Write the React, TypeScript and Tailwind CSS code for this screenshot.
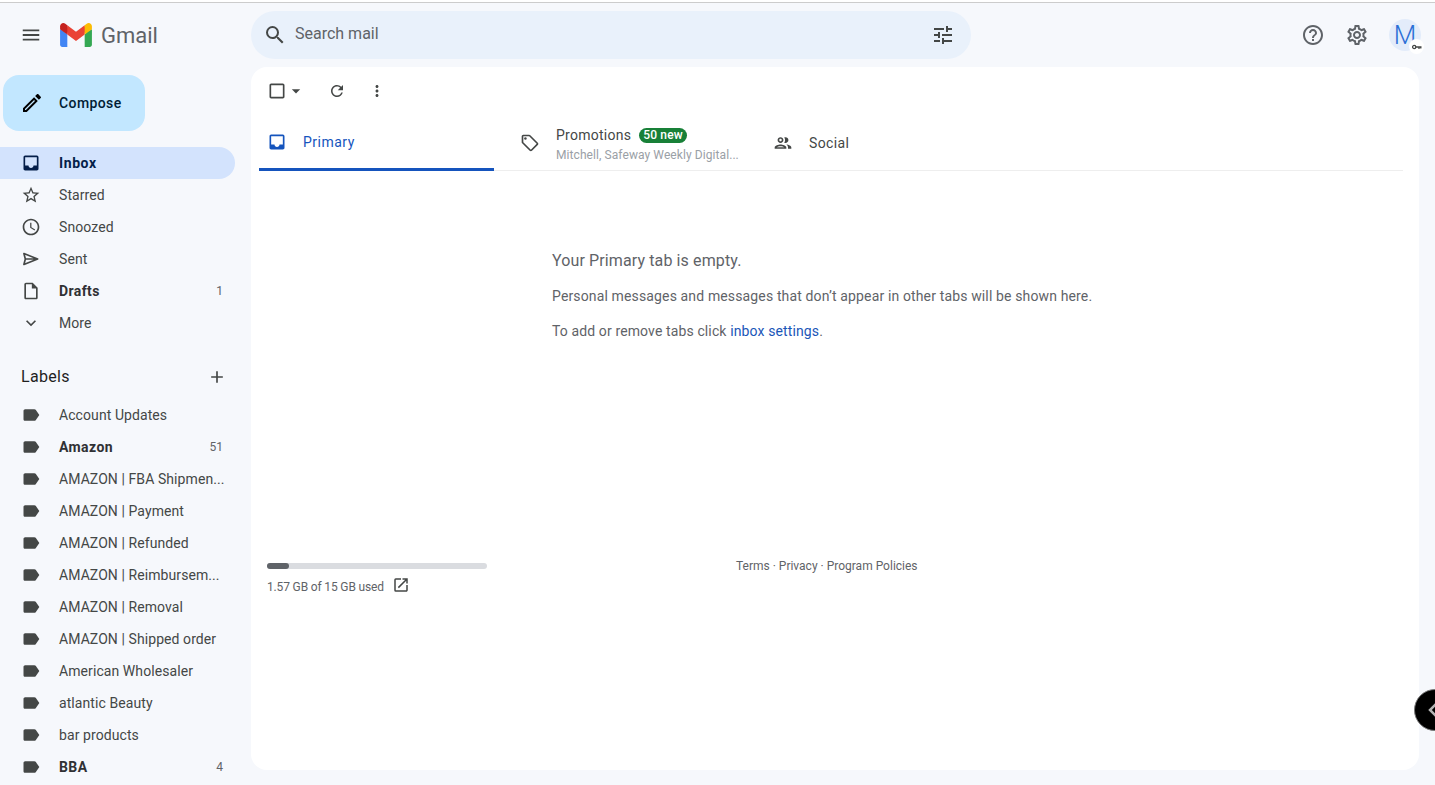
import type { ReactNode } from "react"
import {
  MdAccessTime,
  MdAdd,
  MdArrowDropDown,
  MdCheckBoxOutlineBlank,
  MdExpandMore,
  MdHelpOutline,
  MdInbox,
  MdLabel,
  MdMenu,
  MdMoreVert,
  MdOpenInNew,
  MdOutlineEdit,
  MdOutlineInsertDriveFile,
  MdOutlineLocalOffer,
  MdOutlinePeople,
  MdOutlineSettings,
  MdRefresh,
  MdSearch,
  MdStarBorder,
  MdTune,
} from "react-icons/md"

const mainNav: { label: string; icon: ReactNode; count?: string; bold?: boolean }[] = [
  { label: "Starred", icon: <MdStarBorder size={20} /> },
  { label: "Snoozed", icon: <MdAccessTime size={20} /> },
  { label: "Sent", icon: <SendIcon /> },
  { label: "Drafts", icon: <MdOutlineInsertDriveFile size={20} />, count: "1", bold: true },
  { label: "More", icon: <MdExpandMore size={20} /> },
]

const labels: { label: string; count?: string; bold?: boolean }[] = [
  { label: "Account Updates" },
  { label: "Amazon", count: "51", bold: true },
  { label: "AMAZON | FBA Shipmen..." },
  { label: "AMAZON | Payment" },
  { label: "AMAZON | Refunded" },
  { label: "AMAZON | Reimbursem..." },
  { label: "AMAZON | Removal" },
  { label: "AMAZON | Shipped order" },
  { label: "American Wholesaler" },
  { label: "atlantic Beauty" },
  { label: "bar products" },
  { label: "BBA", count: "4", bold: true },
]

function SendIcon() {
  return (
    <svg width="20" height="20" viewBox="0 0 24 24" fill="none" stroke="currentColor" strokeWidth="2" strokeLinejoin="round">
      <path d="M3.5 5.5 20 12 3.5 18.5l1.7-6.5zM5.2 12H20" />
    </svg>
  )
}

function GmailLogo() {
  return (
    <svg width="32" height="24" viewBox="0 0 256 193">
      <path fill="#4285F4" d="M58.182 192.05V93.14L27.507 65.077 0 49.504v125.091c0 9.658 7.825 17.455 17.455 17.455h40.727Z" />
      <path fill="#34A853" d="M197.818 192.05h40.727c9.659 0 17.455-7.826 17.455-17.455V49.505l-31.156 17.837-27.026 25.798v98.91Z" />
      <path fill="#EA4335" d="m58.182 93.14-4.174-38.647 4.174-36.989L128 69.868l69.818-52.364 4.67 34.992-4.67 40.644L128 145.504z" />
      <path fill="#FBBC04" d="M197.818 17.504V93.14L256 49.504V26.231c0-21.585-24.64-33.89-41.89-20.945l-16.292 12.218Z" />
      <path fill="#C5221F" d="M0 49.504l26.759 20.07L58.182 93.14V17.504L41.89 5.286C24.61-7.66 0 4.646 0 26.23v23.273Z" />
    </svg>
  )
}

function SideRow({ label, icon, count, bold }: { label: string; icon: ReactNode; count?: string; bold?: boolean }) {
  return (
    <div className="flex h-8 w-[235px] items-center pl-[21px] pr-[12px] text-[#444746]">
      <span className="flex w-[38px] shrink-0 items-center">{icon}</span>
      <span className={`whitespace-nowrap text-sm ${bold ? "font-bold tracking-[0.4px] text-[#303134]" : "tracking-[0.08px]"}`}>{label}</span>
      {count && <span className="ml-auto pl-2 text-xs text-[#5f6368]">{count}</span>}
    </div>
  )
}

export default function App() {
  return (
    <div className="relative flex h-[785px] w-[1435px] flex-col overflow-hidden border-t-2 border-white bg-[#f6f8fc] font-['Roboto',sans-serif]">
      <div className="h-px bg-[#cccccc]" />

      <header className="flex h-16 shrink-0 items-center">
        <div className="flex w-[251px] shrink-0 items-center pl-5 text-[#444746]">
          <MdMenu size={22} />
          <span className="ml-[18px]">
            <GmailLogo />
          </span>
          <span className="ml-[9px] text-[22px] text-[#5f6368]">Gmail</span>
        </div>
        <div className="flex h-12 w-[720px] items-center rounded-3xl bg-[#e9f1fb] pl-[12px] pr-[16px] text-[#444746]">
          <MdSearch size={24} />
          <span className="mb-[2px] ml-[8px] text-base text-[#5f6368]">Search mail</span>
          <MdTune size={24} className="ml-auto" />
        </div>
        <div className="ml-auto flex items-center pr-[14px] text-[#5f6368]">
          <MdHelpOutline size={24} />
          <MdOutlineSettings size={24} className="ml-5" />
          <div className="relative ml-5 flex h-8 w-8 items-center justify-center rounded-full bg-[#e3ecfa] text-[26px] font-light text-[#2a6fd6]">
            M
            <span className="absolute -bottom-[3px] -right-[3px] flex h-[15px] w-[15px] items-center justify-center rounded-full bg-white">
              <svg width="10" height="6" viewBox="0 0 10 6" fill="none" stroke="#444746" strokeWidth="1.3">
                <circle cx="2.2" cy="3" r="1.6" />
                <path d="M3.8 3H9.5M7 3v2M8.8 3v1.6" />
              </svg>
            </span>
          </div>
        </div>
      </header>

      <div className="flex min-h-0 flex-1">
        <aside className="w-[251px] shrink-0 overflow-hidden">
          <div className="ml-[3px] mt-2 flex h-14 w-[142px] items-center rounded-2xl bg-[#c2e7ff] pl-[17px] text-[#001d35]">
            <MdOutlineEdit size={24} className="text-black" />
            <span className="ml-[15px] text-sm font-medium tracking-[0.4px]">Compose</span>
          </div>

          <div className="mt-4">
            <div className="flex h-8 w-[235px] items-center rounded-r-full bg-[#d3e3fd] pl-[21px] text-[#041e49]">
              <span className="flex w-[38px] shrink-0 items-center">
                <MdInbox size={20} />
              </span>
              <span className="text-sm font-bold tracking-[0.6px]">Inbox</span>
            </div>
            {mainNav.map((row) => (
              <SideRow key={row.label} {...row} />
            ))}
          </div>

          <div className="mt-[22px] flex h-8 w-[235px] items-center justify-between pl-[21px] pr-[8px]">
            <span className="text-base tracking-[0.3px] text-[#1f1f1f]">Labels</span>
            <MdAdd size={20} className="text-[#444746]" />
          </div>

          <div className="mt-[6px]">
            {labels.map((row) => (
              <SideRow key={row.label} {...row} icon={<MdLabel size={20} />} />
            ))}
          </div>
        </aside>

        <main className="mb-[15px] flex w-[1168px] flex-col rounded-2xl bg-white">
          <div className="flex h-12 items-center pl-[16px] text-[#444746]">
            <MdCheckBoxOutlineBlank size={20} />
            <MdArrowDropDown size={20} className="-ml-[1px]" />
            <MdRefresh size={18} className="ml-[22px]" />
            <MdMoreVert size={18} className="ml-[22px]" />
          </div>

          <div className="ml-2 mr-4 flex h-[56px] items-stretch border-b border-[#eeeeee]">
            <div className="-mb-px flex w-[235px] items-center border-b-[3px] border-[#1554bd] pl-2 text-[#1554bd]">
              <MdInbox size={20} />
              <span className="ml-4 text-sm tracking-[0.5px]">Primary</span>
            </div>
            <div className="flex w-[259px] items-center pl-[26px] text-[#444746]">
              <MdOutlineLocalOffer size={20} />
              <div className="ml-4 pt-[3px]">
                <div className="flex items-center">
                  <span className="text-sm tracking-[0.25px]">Promotions</span>
                  <span className="ml-2 rounded-full bg-[#188038] px-[4px] text-xs font-medium leading-[15px] tracking-[0.2px] text-white">50 new</span>
                </div>
                <div className="mt-[2px] text-xs tracking-[0.08px] text-[#9aa0a6]">Mitchell, Safeway Weekly Digital...</div>
              </div>
            </div>
            <div className="flex items-center pl-5 text-[#444746]">
              <MdOutlinePeople size={20} />
              <span className="ml-4 text-sm tracking-[0.35px]">Social</span>
            </div>
          </div>

          <div className="ml-[301px] mt-[78px] text-[#5f6368]">
            <div className="text-base tracking-[0.12px]">Your Primary tab is empty.</div>
            <div className="mt-[13px] text-sm tracking-[0.14px]">Personal messages and messages that don’t appear in other tabs will be shown here.</div>
            <div className="mt-[15px] text-sm tracking-[0.12px]">
              To add or remove tabs click <span className="text-[#1a56b8]">inbox settings</span>.
            </div>
          </div>

          <div className="mt-[222px] flex pl-4">
            <div className="w-[220px]">
              <div className="h-[6px] rounded-full bg-[#dadce0]">
                <div className="h-[6px] w-[22px] rounded-full bg-[#5f6368]" />
              </div>
              <div className="mt-[9px] flex items-center text-xs tracking-[-0.15px] text-[#5f6368]">
                1.57 GB of 15 GB used
                <MdOpenInNew size={18} className="ml-2 -translate-y-[2px] text-[#444746]" />
              </div>
            </div>
            <div className="-mt-[5px] ml-[249px] text-xs text-[#5f6368]">Terms · Privacy · Program Policies</div>
          </div>
        </main>
      </div>

      <div className="absolute left-[1414px] top-[687px] flex h-[42px] w-[42px] items-center rounded-full border border-[#777777] bg-black pl-[12px]">
        <svg width="12" height="16" viewBox="0 0 12 16" fill="none" stroke="#b4b4b4" strokeWidth="2.5">
          <path d="M9 2 3 8l6 6" />
        </svg>
      </div>
    </div>
  )
}
